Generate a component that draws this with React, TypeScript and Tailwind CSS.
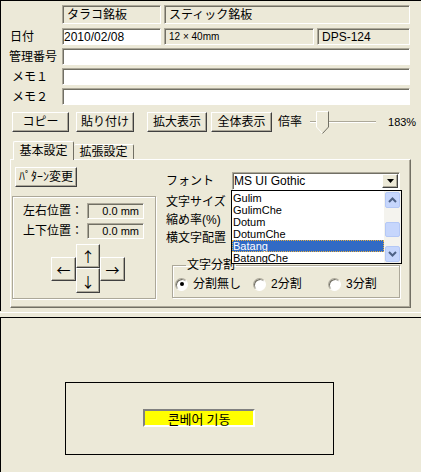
import React from 'react';
import clsx from 'clsx';

const sunken =
  'border border-t-[#aca899] border-l-[#aca899] border-r-white border-b-white shadow-[inset_1px_1px_0_#716f64]';
const raised =
  'border border-t-white border-l-white border-r-[#404040] border-b-[#404040] shadow-[inset_-1px_-1px_0_#aca899]';
const etched = 'border border-[#aca899] shadow-[inset_1px_1px_0_#fff,1px_1px_0_#fff]';

function Btn({ className, children }: { className?: string; children: React.ReactNode }) {
  return (
    <div className={clsx('flex items-center justify-center bg-[#ECE9D8] text-[12px] leading-none', raised, className)}>
      {children}
    </div>
  );
}

function Radio({ checked, label, className }: { checked?: boolean; label: string; className?: string }) {
  return (
    <div className={clsx('flex items-center gap-[5px]', className)}>
      <span
        className={clsx(
          'w-[13px] h-[13px] rounded-full bg-white flex items-center justify-center',
          'border border-t-[#aca899] border-l-[#aca899] border-r-white border-b-white shadow-[inset_1px_1px_0_#716f64]'
        )}
      >
        {checked && <span className="w-[4px] h-[4px] rounded-full bg-black" />}
      </span>
      <span className="text-[12px] leading-none">{label}</span>
    </div>
  );
}

function Chevron({ up }: { up?: boolean }) {
  return (
    <svg width="9" height="6" viewBox="0 0 9 6">
      <path d={up ? 'M1 5 L4.5 1.5 L8 5' : 'M1 1 L4.5 4.5 L8 1'} fill="none" stroke="#4d6185" strokeWidth="2" />
    </svg>
  );
}

const fonts = ['Gulim', 'GulimChe', 'Dotum', 'DotumChe', 'Batang', 'BatangChe'];
const arrow = "font-['Noto_Sans_CJK_JP',sans-serif] text-[14px]";

export default function App() {
  return (
    <div className="w-[421px] h-[472px] overflow-hidden bg-[#ECE9D8] text-black font-['Liberation_Sans','Noto_Sans_CJK_JP',sans-serif] flex flex-col">
      {/* upper pane */}
      <div className="h-[311px] border-t border-l border-black flex flex-col">
        {/* row 0 */}
        <div className="flex mt-[4px] h-[19px]">
          <div className="w-[61px]" />
          <div className={clsx('w-[99px] flex items-center pl-[4px] text-[12px] leading-none', sunken)}>タラコ銘板</div>
          <div className={clsx('w-[246px] ml-[3px] flex items-center pl-[4px] text-[12px] leading-none', sunken)}>スティック銘板</div>
        </div>
        {/* row 1 */}
        <div className="flex mt-[4px] h-[17px]">
          <div className="w-[61px] pl-[9px] flex items-center text-[12px] leading-none">日付</div>
          <div className={clsx('w-[99px] bg-white flex items-center pl-[1px] text-[12px] leading-none', sunken)}>2010/02/08</div>
          <div className={clsx('w-[150px] ml-[3px] flex items-center pl-[4px] text-[10px] leading-none', sunken)}>12 × 40mm</div>
          <div className={clsx('w-[93px] ml-[3px] flex items-center pl-[4px] text-[12px] leading-none', sunken)}>DPS-124</div>
        </div>
        {['管理番号', 'メモ１', 'メモ２'].map((l) => (
          <div key={l} className="flex mt-[3px] h-[17px]">
            <div className={clsx('w-[61px] flex items-center text-[12px] leading-none', l === '管理番号' ? 'pl-[8px]' : 'pl-[11px]')}>
              {l}
            </div>
            <div className={clsx('w-[348px] bg-white', sunken)} />
          </div>
        ))}

        {/* button row */}
        <div className="flex items-center mt-[7px] h-[20px]">
          <Btn className="ml-[11px] w-[57px] h-[20px]">コピー</Btn>
          <Btn className="ml-[7px] w-[58px] h-[20px]">貼り付け</Btn>
          <Btn className="ml-[13px] w-[60px] h-[20px]">拡大表示</Btn>
          <Btn className="ml-[4px] w-[61px] h-[20px]">全体表示</Btn>
          <span className="ml-[6px] text-[12px] leading-none">倍率</span>
          <div className="ml-[8px] w-[66px] h-[24px] relative shrink-0">
            <div className="mt-[11px] h-[2px] border-t border-t-[#aca899] border-b border-b-white" />
            <svg className="absolute left-[6px] top-[1px]" width="14" height="24" viewBox="0 0 14 24">
              <polygon points="0.5,0.5 12.5,0.5 12.5,16 6.5,22.5 0.5,16" fill="#ECE9D8" />
              <polyline points="6.5,22.5 0.5,16 0.5,0.5 12.5,0.5" fill="none" stroke="#fff" />
              <polyline points="12.5,0.5 12.5,16 6.5,22.5" fill="none" stroke="#716f64" />
            </svg>
          </div>
          <span className="ml-[12px] text-[11px] leading-none">183%</span>
        </div>

        {/* tabs */}
        <div className="flex items-end mt-[9px] h-[19px] -mb-px relative z-10">
          <div className="ml-[12px] w-[61px] h-[19px] bg-[#ECE9D8] border-t border-l border-white border-r border-r-[#716f64] rounded-t-[2px] flex items-center justify-center text-[12px] leading-none pb-[1px]">
            基本設定
          </div>
          <div className="w-[60px] h-[15px] mb-[1px] border-t border-white border-r border-r-[#716f64] rounded-t-[2px] flex items-center justify-center text-[12px] leading-none">
            拡張設定
          </div>
        </div>

        {/* tab panel */}
        <div className="ml-[9px] w-[401px] h-[149px] border-t border-l border-white border-r border-b border-r-[#716f64] border-b-[#716f64] shadow-[inset_-1px_-1px_0_#aca899] flex">
          {/* left column */}
          <div className="ml-[1px] w-[144px] flex flex-col">
            <Btn className="ml-[3px] mt-[7px] w-[62px] h-[20px] text-[11px]">ﾊﾟﾀｰﾝ変更</Btn>
            <div className={clsx('mt-[9px] w-[144px] h-[103px] flex flex-col', etched)}>
              {['左右位置：', '上下位置：'].map((l, i) => (
                <div key={l} className={clsx('flex items-center h-[16px]', i === 0 ? 'mt-[6px]' : 'mt-[4px]')}>
                  <div className="w-[70px] text-right text-[12px] leading-none">{l}</div>
                  <div className={clsx('ml-[4px] w-[57px] h-[16px] flex items-center justify-end pr-[4px] text-[11px] leading-none', sunken)}>
                    0.0 mm
                  </div>
                </div>
              ))}
              <div className="flex items-center mt-[5px] ml-[38px]">
                <Btn className={clsx('w-[25px] h-[24px]', arrow)}>←</Btn>
                <div className="flex flex-col w-[24px]">
                  <Btn className={clsx('h-[24px]', arrow)}>↑</Btn>
                  <Btn className={clsx('h-[25px]', arrow)}>↓</Btn>
                </div>
                <Btn className={clsx('w-[25px] h-[24px]', arrow)}>→</Btn>
              </div>
            </div>
          </div>

          {/* right column */}
          <div className="ml-[9px] w-[236px] relative flex flex-col">
            <div className="flex items-center mt-[12px] h-[18px]">
              <div className="w-[66px] pl-[1px] text-[12px] leading-none">フォント</div>
              <div className={clsx('ml-[1px] w-[168px] h-[18px] bg-white flex items-center', sunken)}>
                <span className="flex-1 pl-[1px] text-[12px] leading-none">MS UI Gothic</span>
                <div className={clsx('w-[16px] h-[14px] mr-px flex items-center justify-center bg-[#ECE9D8]', raised)}>
                  <svg width="7" height="4" viewBox="0 0 7 4">
                    <polygon points="0,0 7,0 3.5,4" fill="#000" />
                  </svg>
                </div>
              </div>
            </div>
            <div className="mt-[3px] h-[18px] flex items-center pl-[1px] text-[12px] leading-none">文字サイズ</div>
            <div className="h-[18px] flex items-center pl-[1px] text-[12px] leading-none">縮め率(%)</div>
            <div className="h-[18px] flex items-center pl-[1px] text-[12px] leading-none">横文字配置</div>

            <fieldset className={clsx('mt-[11px] ml-[7px] w-[228px] h-[40px]', etched)}>
              <legend className="ml-[13px] px-[1px] text-[12px] leading-[14px]">文字分割</legend>
              <div className="flex items-center h-[24px] pl-[2px]">
                <Radio checked label="分割無し" className="w-[78px]" />
                <Radio label="2分割" className="w-[75px]" />
                <Radio label="3分割" />
              </div>
            </fieldset>

            {/* open dropdown list */}
            <div className="absolute left-[66px] top-[30px] w-[171px] h-[74px] border border-black bg-white flex">
              <div className="flex-1 pt-px">
                {fonts.map((f) => (
                  <div
                    key={f}
                    className={clsx(
                      'h-[12px] pl-[1px] text-[11px] leading-[12px]',
                      f === 'Batang' ? 'bg-[#316AC5] text-white outline outline-1 outline-dotted outline-[#e8b040] -outline-offset-1' : ''
                    )}
                  >
                    {f}
                  </div>
                ))}
              </div>
              <div className="w-[17px] bg-[#f4f3ee] flex flex-col">
                <div className="h-[16px] m-px rounded-[2px] bg-[#c6d6fc] border border-[#b4c8f6] flex items-center justify-center">
                  <Chevron up />
                </div>
                <div className="mt-[13px] h-[15px] mx-px rounded-[2px] bg-[#c6d6fc] border border-[#b4c8f6]" />
                <div className="mt-auto h-[16px] m-px rounded-[2px] bg-[#c6d6fc] border border-[#b4c8f6] flex items-center justify-center">
                  <Chevron />
                </div>
              </div>
            </div>
          </div>
        </div>
      </div>

      {/* splitter */}
      <div className="h-[6px] flex flex-col">
        <div className="mt-px h-px bg-white" />
      </div>

      {/* lower pane */}
      <div className="flex-1 border-t border-l border-black">
        <div className="ml-[64px] mt-[64px] w-[269px] h-[73px] border border-black">
          <div
            className={clsx(
              'ml-[77px] mt-[26px] w-[112px] h-[18px] bg-[#ffff00] flex items-center justify-center text-[13px] leading-none font-["Noto_Sans_CJK_KR",sans-serif]',
              'border-2 border-t-[#808080] border-l-[#808080] border-r-white border-b-white'
            )}
          >
            콘베어 기동
          </div>
        </div>
      </div>
    </div>
  );
}
